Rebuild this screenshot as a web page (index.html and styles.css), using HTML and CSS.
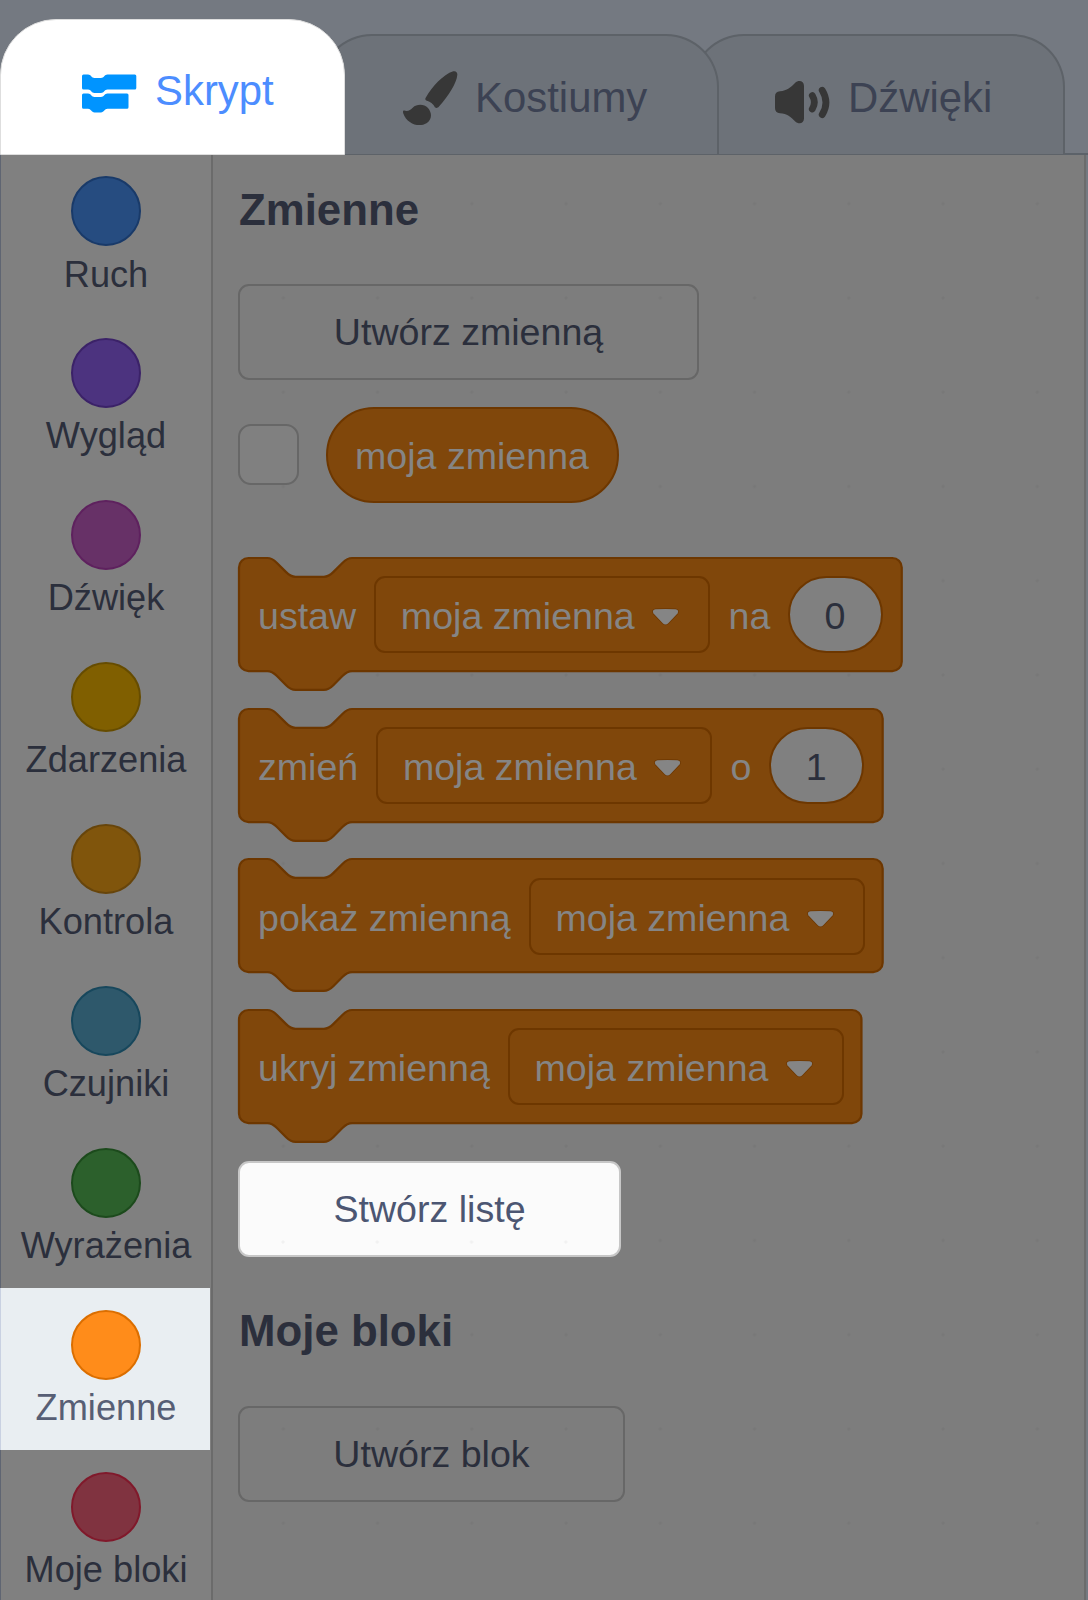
FILE: index.html
```html
<!DOCTYPE html>
<html lang="pl">
<head>
<meta charset="utf-8">
<title>Zmienne</title>
<link rel="stylesheet" href="styles.css">
</head>
<body>
<nav class="tabs">
  <div class="tab tab-active">
    <svg class="icon-script" width="55" height="39" viewBox="0 0 55 39"><g fill="#0094ff"><path d="M1.500 .5H6C9 .5 9.500 4 12.500 4H19C22 4 22.500 .5 25.500 .5H52.800Q54.300 .5 54.300 2V14Q54.300 15.500 52.800 15.500H25.500C22.500 15.500 22 19 19 19H12.500C9.500 19 9 15.500 6 15.500H1.500Q0 15.500 0 14V2Q0 .5 1.500 .5Z"/><path d="M1.500 19.500H6C9 19.500 9.500 23 12.500 23H19C22 23 22.500 19.500 25.500 19.500H45Q46.500 19.500 46.500 21V33.300Q46.500 34.800 45 34.800H25.500C22.500 34.800 22 38.500 19 38.500H12.500C9.500 38.500 9 34.800 6 34.800H1.500Q0 34.800 0 33.300V21Q0 19.500 1.500 19.500Z"/></g></svg>
    <span>Skrypt</span>
  </div>
  <div class="tab tab-costumes">
    <svg width="55" height="55" viewBox="0 0 55 55"><g fill="#373737"><path d="M50.300 .3C53 -.4 54.600 1.600 54.300 4C53.700 12 45.500 25 36 35.600C34.400 37.300 33.300 37.400 31.900 36.300C30.500 33 27 30.500 23.200 29.500C22 28.800 22 27.600 23 26.200C29 16 40 3.500 50.300 .3Z"/><path d="M1.200 39.600C5 41 7.500 38.700 9.700 36.700C14 32.700 21 32.900 25 37C29.500 42.300 28.800 49 23.500 52.200C16 56.800 4 53 .2 42.200C-.2 40.700 0 39.500 1.200 39.600Z"/></g></svg>
    <span>Kostiumy</span>
  </div>
  <div class="tab tab-sounds">
    <svg width="55" height="43" viewBox="0 0 55 43"><path fill="#373737" d="M5 10.300C12 9.800 16 6 20 2C23.500 -1.400 29 -.4 29 5V37.500C29 42.700 23.500 43.700 20 40.200C16 36.200 12 32.500 5 32.200Q0 32 0 27V15.500Q0 10.500 5 10.300Z"/><path d="M37.300 14.600Q41.400 21.300 37.300 28M47.200 9.200Q54.700 21.400 47.200 33.600" fill="none" stroke="#373737" stroke-width="6.800" stroke-linecap="round"/></svg>
    <span>Dźwięki</span>
  </div>
</nav>
<div class="editor">
  <aside class="categories">
    <div class="category"><i class="dot motion"></i><span>Ruch</span></div>
    <div class="category"><i class="dot looks"></i><span>Wygląd</span></div>
    <div class="category"><i class="dot sound"></i><span>Dźwięk</span></div>
    <div class="category"><i class="dot events"></i><span>Zdarzenia</span></div>
    <div class="category"><i class="dot control"></i><span>Kontrola</span></div>
    <div class="category"><i class="dot sensing"></i><span>Czujniki</span></div>
    <div class="category"><i class="dot operators"></i><span>Wyrażenia</span></div>
    <div class="category selected"><i class="dot variables"></i><span>Zmienne</span></div>
    <div class="category"><i class="dot custom"></i><span>Moje bloki</span></div>
  </aside>
  <main class="palette">
    <h2>Zmienne</h2>
    <div class="button make-variable">Utwórz zmienną</div>
    <div class="reporter-row"><span class="checkbox"></span><span class="reporter"><span class="label">moja zmienna</span></span></div>
    <div class="block">
      <svg class="shape" width="664" height="133"><path transform="scale(2.356)" d="M0 4A4 4 0 0 1 4 0H12c2 0 3 1 4 2l4 4c1 1 2 2 4 2h12c2 0 3-1 4-2l4-4c1-1 2-2 4-2H277.300a4 4 0 0 1 4 4v40a4 4 0 0 1-4 4H48c-2 0-3 1-4 2l-4 4c-1 1-2 2-4 2h-12c-2 0-3-1-4-2l-4-4c-1-1-2-2-4-2H4a4 4 0 0 1-4-4z"/></svg>
      <span class="label">ustaw</span>
      <span class="dropdown"><span class="label">moja zmienna</span><svg class="arrow" width="29" height="21" viewBox="0 0 29 21"><path d="M4.500 2.300Q14.500 1.500 24.500 2.300Q28.500 3 26.500 6.500L17.500 16Q14.500 19 11.500 16L2.500 6.500Q.5 3 4.500 2.300Z"/></svg></span>
      <span class="label">na</span>
      <span class="number">0</span>
    </div>
    <div class="block">
      <svg class="shape" width="645" height="133"><path transform="scale(2.356)" d="M0 4A4 4 0 0 1 4 0H12c2 0 3 1 4 2l4 4c1 1 2 2 4 2h12c2 0 3-1 4-2l4-4c1-1 2-2 4-2H269.200a4 4 0 0 1 4 4v40a4 4 0 0 1-4 4H48c-2 0-3 1-4 2l-4 4c-1 1-2 2-4 2h-12c-2 0-3-1-4-2l-4-4c-1-1-2-2-4-2H4a4 4 0 0 1-4-4z"/></svg>
      <span class="label">zmień</span>
      <span class="dropdown"><span class="label">moja zmienna</span><svg class="arrow" width="29" height="21" viewBox="0 0 29 21"><path d="M4.500 2.300Q14.500 1.500 24.500 2.300Q28.500 3 26.500 6.500L17.500 16Q14.500 19 11.500 16L2.500 6.500Q.5 3 4.500 2.300Z"/></svg></span>
      <span class="label">o</span>
      <span class="number">1</span>
    </div>
    <div class="block">
      <svg class="shape" width="645" height="133"><path transform="scale(2.356)" d="M0 4A4 4 0 0 1 4 0H12c2 0 3 1 4 2l4 4c1 1 2 2 4 2h12c2 0 3-1 4-2l4-4c1-1 2-2 4-2H269.200a4 4 0 0 1 4 4v40a4 4 0 0 1-4 4H48c-2 0-3 1-4 2l-4 4c-1 1-2 2-4 2h-12c-2 0-3-1-4-2l-4-4c-1-1-2-2-4-2H4a4 4 0 0 1-4-4z"/></svg>
      <span class="label">pokaż zmienną</span>
      <span class="dropdown"><span class="label">moja zmienna</span><svg class="arrow" width="29" height="21" viewBox="0 0 29 21"><path d="M4.500 2.300Q14.500 1.500 24.500 2.300Q28.500 3 26.500 6.500L17.500 16Q14.500 19 11.500 16L2.500 6.500Q.5 3 4.500 2.300Z"/></svg></span>
    </div>
    <div class="block">
      <svg class="shape" width="624" height="133"><path transform="scale(2.356)" d="M0 4A4 4 0 0 1 4 0H12c2 0 3 1 4 2l4 4c1 1 2 2 4 2h12c2 0 3-1 4-2l4-4c1-1 2-2 4-2H260.200a4 4 0 0 1 4 4v40a4 4 0 0 1-4 4H48c-2 0-3 1-4 2l-4 4c-1 1-2 2-4 2h-12c-2 0-3-1-4-2l-4-4c-1-1-2-2-4-2H4a4 4 0 0 1-4-4z"/></svg>
      <span class="label">ukryj zmienną</span>
      <span class="dropdown"><span class="label">moja zmienna</span><svg class="arrow" width="29" height="21" viewBox="0 0 29 21"><path d="M4.500 2.300Q14.500 1.500 24.500 2.300Q28.500 3 26.500 6.500L17.500 16Q14.500 19 11.500 16L2.500 6.500Q.5 3 4.500 2.300Z"/></svg></span>
    </div>
    <div class="button make-list">Stwórz listę</div>
    <h2 class="my-blocks">Moje bloki</h2>
    <div class="button make-block">Utwórz blok</div>
  </main>
</div>
</body>
</html>
```
FILE: styles.css
```css
* { box-sizing: border-box; }
body {
  margin: 0;
  width: 1088px;
  height: 1600px;
  overflow: hidden;
  background: #747981;
  color: #2b2f3c;
  font-family: "Liberation Sans", Arial, sans-serif;
  white-space: nowrap;
}
svg { display: block; flex: none; }

.tabs {
  display: flex;
  align-items: flex-end;
  height: 155px;
  background: linear-gradient(#5c6269, #5c6269) 0 153px / 100% 2px no-repeat;
}
.tab {
  position: relative;
  display: flex;
  align-items: center;
  height: 121px;
  border: 2px solid #5d6268;
  border-bottom-width: 1px;
  border-radius: 53px 53px 0 0;
  background: #6d7279;
  color: #3c4253;
  font-size: 41.9px;
  line-height: 48px;
}
.tab-active {
  z-index: 3;
  width: 345px;
  height: 136px;
  padding: 4px 0 0 81px;
  gap: 18px;
  border: 1px solid #dedede;
  border-radius: 56px 56px 0 0;
  background: #fff;
  color: #4c8dff;
}
.icon-script { margin-top: 8px; }
.tab-active span { margin-top: 3px; }
.tab-costumes {
  z-index: 2;
  width: 400px;
  margin-left: -26px;
  padding: 6px 0 0 82px;
  gap: 17px;
}
.tab-costumes svg { margin-top: 1px; }
.tab-sounds {
  z-index: 1;
  width: 374px;
  margin-left: -28px;
  padding: 6px 0 0 82px;
  gap: 18px;
}
.tab-sounds svg { margin-top: 9px; }

.editor { display: flex; height: 1445px; }
.categories {
  width: 213px;
  border-left: 1px solid #5f6572;
  border-right: 2px solid #6b6b6b;
  background: #808080;
}
.category {
  display: flex;
  flex-direction: column;
  align-items: center;
  height: 161.9px;
  padding-top: 21.400px;
  font-size: 36.2px;
  line-height: 42px;
}
.category span { margin-top: 7.200px; }
.selected {
  width: 210px;
  margin-left: -1px;
  padding-left: 1px;
  border-left: 1px solid #c9d1e2;
  background: #e9eef2;
  color: #575e75;
}
.dot { width: 70px; height: 70px; border: 2px solid; border-radius: 50%; }
.motion { background: #264c80; border-color: #193a69; }
.looks { background: #4c337f; border-color: #3b2268; }
.sound { background: #673167; border-color: #5e215e; }
.events { background: #805f00; border-color: #664c00; }
.control { background: #80550c; border-color: #67450b; }
.sensing { background: #2e586b; border-color: #17475c; }
.operators { background: #2c602c; border-color: #1c4a1c; }
.variables { background: #ff8c1a; border-color: #db6e00; }
.custom { background: #803340; border-color: #80192b; }

.palette {
  width: 873px;
  padding: 30px 0 0 25px;
  border-right: 2px solid #6c6c6c;
  background: radial-gradient(circle at 2px 2px, #787878 0 1.200px, transparent 2px) 68.300px 46.700px / 94.260px 94.260px #7d7d7d;
}
h2 { margin: 0; height: 50px; padding-left: 1px; font-size: 43.8px; line-height: 50px; }
.button {
  display: flex;
  align-items: center;
  justify-content: center;
  height: 96px;
  border: 2px solid #676767;
  border-radius: 11px;
  font-size: 37.6px;
}
.make-variable { width: 461px; margin-top: 49px; }
.make-list {
  width: 383px;
  border-color: #c7c7c7;
  background: radial-gradient(circle at 2px 2px, #f1f1f1 0 1.200px, transparent 2px) 41px 77px / 94.260px 94.260px #fbfbfb;
  color: #4c5672;
}
.my-blocks { margin-top: 49.300px; }
.make-block { width: 387px; margin-top: 49.700px; }

.reporter-row { display: flex; align-items: center; height: 97px; margin: 26px 0 54.900px; gap: 26.500px; }
.checkbox { width: 61px; height: 61px; border: 2px solid #676767; border-radius: 13px; background: #808080; }
.reporter {
  display: flex;
  align-items: center;
  justify-content: center;
  width: 293px;
  height: 96px;
  border: 2px solid #6d3700;
  border-radius: 48px;
  background: #80470b;
}
.label { position: relative; top: 2px; color: #858585; font-size: 37.6px; }
.block {
  position: relative;
  display: flex;
  align-items: center;
  height: 113.100px;
  margin: 0 0 37.700px .7px;
  padding-left: 19.300px;
  gap: 18.200px;
}
.shape { position: absolute; left: 0; top: 0; overflow: visible; fill: #80470b; stroke: #6d3700; stroke-width: .95; }
.dropdown {
  position: relative;
  display: flex;
  align-items: center;
  width: 336px;
  height: 77px;
  padding-left: 24.500px;
  border: 2px solid #6d3700;
  border-radius: 11px;
}
.arrow { margin-left: 16.500px; margin-top: 6px; fill: #858585; stroke: #6d3700; stroke-width: 1.500; paint-order: stroke; }
.number {
  position: relative;
  display: flex;
  align-items: center;
  justify-content: center;
  width: 95px;
  height: 77px;
  margin-left: -.6px;
  padding: 4px 1px 0 0;
  border: 2px solid #6d3700;
  border-radius: 39px;
  background: #808080;
  font-size: 37.6px;
}
```
